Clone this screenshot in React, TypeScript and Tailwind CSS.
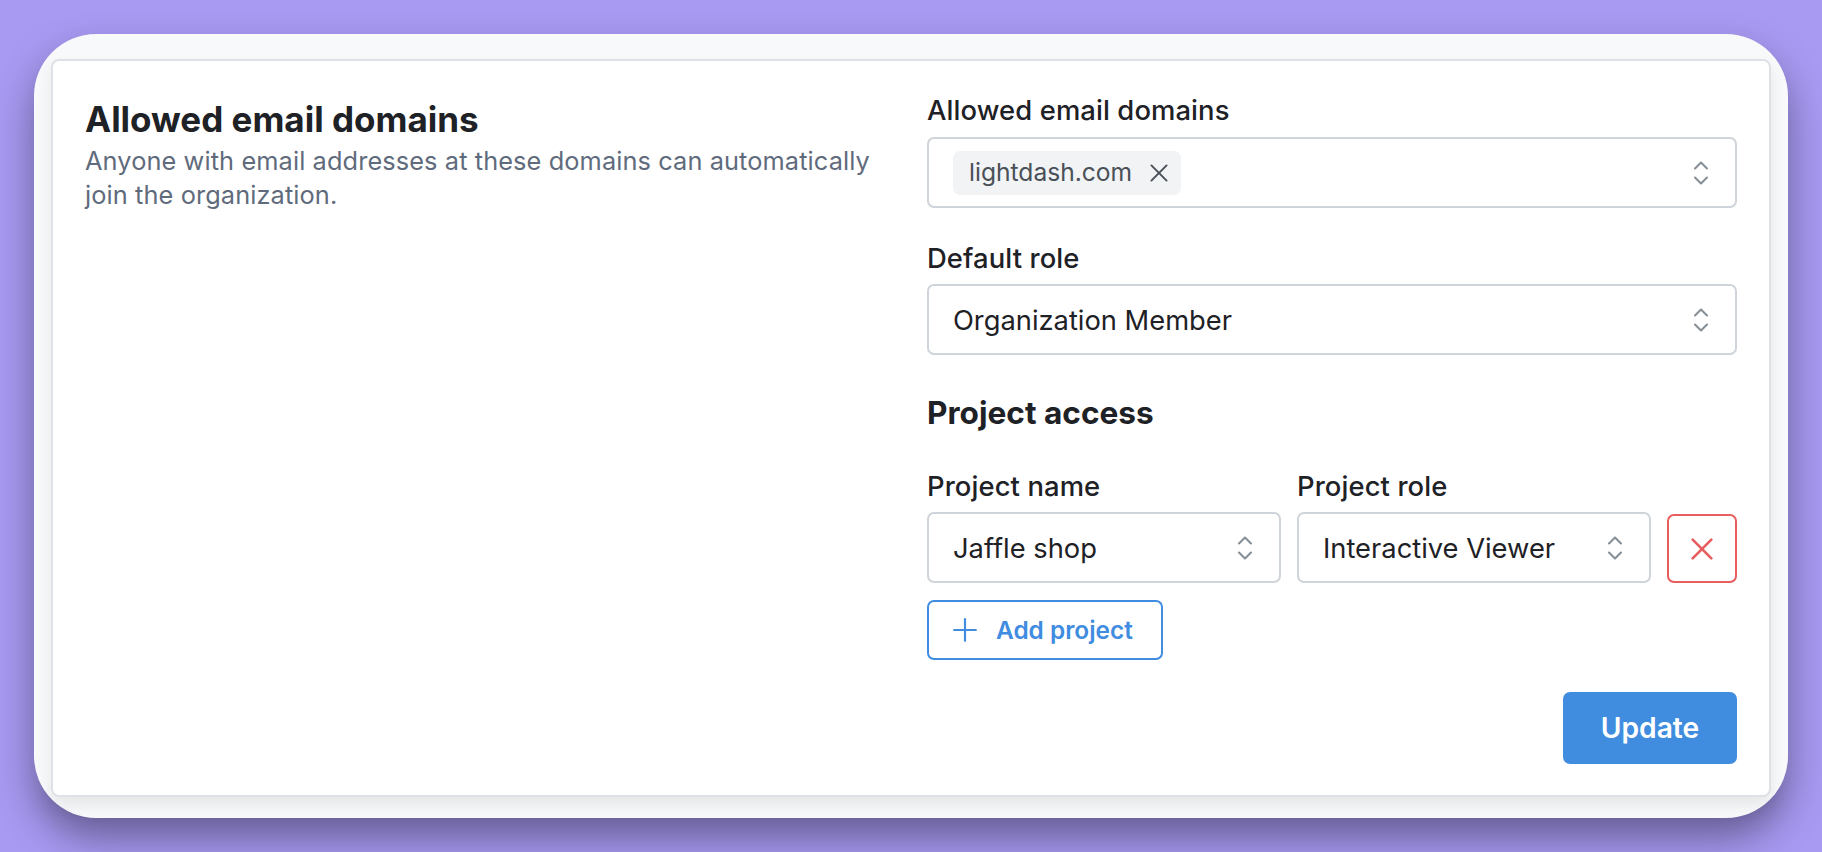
const font = { fontFamily: "Inter, sans-serif" };

function Selector() {
  return (
    <svg width="36" height="36" viewBox="0 0 24 24" fill="none" stroke="#868e96" strokeWidth="1.4" strokeLinecap="round" strokeLinejoin="round" className="shrink-0">
      <path d="M8 9l4 -4l4 4" />
      <path d="M16 15l-4 4l-4 -4" />
    </svg>
  );
}

function Select({ value, className = "" }: { value: string; className?: string }) {
  return (
    <div className={`flex h-[71px] items-center justify-between rounded-[7px] border-2 border-[#ced4da] bg-white pl-[24px] pr-[16px] text-[27.3px] text-[#1e2125] ${className}`}>
      <span className="whitespace-nowrap pt-[4px]">{value}</span>
      <Selector />
    </div>
  );
}

function Label({ children }: { children: string }) {
  return <div className="h-[36px] text-[27.4px] font-medium leading-[36px] tracking-[0.1px] text-[#1e2125]">{children}</div>;
}

export default function App() {
  return (
    <div style={font} className="h-[852px] w-[1822px] overflow-hidden bg-[#a899f2] px-[34px] pt-[34px] antialiased">
      <div className="h-[784px] w-[1754px] rounded-[62px] bg-[#f8f9fa] pb-[21px] pl-[17px] pr-[17px] pt-[25px] shadow-[0_20px_40px_-2px_rgba(0,0,0,0.42)]">
        <div className="flex h-[738px] rounded-[8px] border-2 border-[#dee2e6] bg-white pb-[29px] pl-[32px] pr-[32px] pt-[31px] shadow-[0_8px_16px_rgba(0,0,0,0.08)]">
          <div className="w-[842px] shrink-0 pt-[4px]">
            <h2 className="text-[35px] font-bold leading-[46px] text-[#1e2125]">Allowed email domains</h2>
            <p className="mt-[2px] w-[800px] text-[25.35px] leading-[34px] tracking-[0.1px] text-[#5f6b7c]">
              Anyone with email addresses at these domains can automatically join the organization.
            </p>
          </div>
          <div className="flex min-w-0 flex-1 flex-col">
            <Label>Allowed email domains</Label>
            <div className="mt-[9px] flex h-[71px] items-center justify-between rounded-[7px] border-2 border-[#ced4da] bg-white pl-[24px] pr-[16px]">
              <div className="flex h-[44px] w-[228px] items-center justify-between rounded-[7px] bg-[#f1f3f5] pl-[16px] pr-[9px] text-[24.6px] text-[#495057]">
                <span>lightdash.com</span>
                <svg width="26" height="26" viewBox="0 0 24 24" fill="none" stroke="#495057" strokeWidth="1.8" strokeLinecap="round">
                  <path d="M5 5l14 14" />
                  <path d="M19 5L5 19" />
                </svg>
              </div>
              <Selector />
            </div>
            <div className="mt-[32px]"><Label>Default role</Label></div>
            <Select value="Organization Member" className="mt-[8px]" />
            <h3 className="mt-[38px] text-[31.6px] font-bold leading-[40px] text-[#1e2125]">Project access</h3>
            <div className="mt-[35px] flex gap-[16px]">
              <div className="w-[354px]"><Label>Project name</Label></div>
              <div className="w-[354px]"><Label>Project role</Label></div>
            </div>
            <div className="mt-[8px] flex items-end gap-[16px]">
              <Select value="Jaffle shop" className="w-[354px]" />
              <Select value="Interactive Viewer" className="w-[354px]" />
              <div className="flex h-[69px] w-[70px] items-center justify-center rounded-[7px] border-2 border-[#e85d5d]">
                <svg width="32" height="32" viewBox="0 0 24 24" fill="none" stroke="#e85d5d" strokeWidth="2" strokeLinecap="round">
                  <path d="M5 5l14 14" />
                  <path d="M19 5L5 19" />
                </svg>
              </div>
            </div>
            <div className="mt-[17px] flex h-[60px] w-[236px] items-center rounded-[7px] border-2 border-[#3f8ce0] pl-[23px] text-[24.4px] font-semibold text-[#3f8ce0]">
              <svg width="26" height="26" viewBox="0 0 24 24" fill="none" stroke="#3f8ce0" strokeWidth="2" strokeLinecap="round">
                <path d="M12 2v20" />
                <path d="M2 12h20" />
              </svg>
              <span className="ml-[18px]">Add project</span>
            </div>
            <div className="mt-[32px] flex justify-end">
              <div className="flex h-[72px] w-[174px] items-center justify-center rounded-[7px] bg-[#408de0] text-[28.2px] font-semibold text-white">Update</div>
            </div>
          </div>
        </div>
      </div>
    </div>
  );
}
